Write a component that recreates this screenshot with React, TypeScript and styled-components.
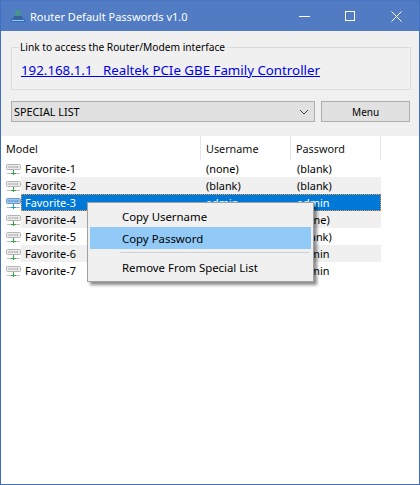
import React from "react";
import styled, { createGlobalStyle } from "styled-components";

const Global = createGlobalStyle`
  html, body { margin: 0; padding: 0; background: #fff; }
  body { font-family: "Noto Sans", "Open Sans", sans-serif; font-size: 11px; color: #000; }
  #root { width: 420px; height: 485px; }
`;

const Window = styled.div`
  width: 420px;
  height: 485px;
  box-sizing: border-box;
  border: 1px solid #3f6fc4;
  border-top-color: #4a74c0;
  display: flex;
  flex-direction: column;
  background: #fff;
  position: relative;
  overflow: hidden;
`;

const TitleBar = styled.div`
  height: 30px;
  flex: none;
  background: #517bc3;
  display: flex;
  align-items: center;
  padding-left: 9px;
  color: #fff;
`;

const AppIcon = styled.svg`
  width: 16px;
  height: 16px;
  flex: none;
  margin-right: 4px;
`;

const Title = styled.span`
  flex: 1;
  font-size: 11px;
`;

const CaptionButton = styled.div`
  width: 46px;
  height: 30px;
  display: flex;
  align-items: center;
  justify-content: center;
`;

const Top = styled.div`
  flex: none;
  height: 105px;
  background: #f0f0f0;
  padding: 16px 9px 0 10px;
  box-sizing: border-box;
`;

const Group = styled.div`
  height: 43px;
  width: 400px;
  box-sizing: border-box;
  border: 1px solid #dcdcdc;
  position: relative;
  padding: 13px 0 0 9px;
`;

const Legend = styled.span`
  position: absolute;
  left: 7px;
  top: -8px;
  background: #f0f0f0;
  padding: 0 2px 0 1px;
  font-size: 10.2px;
  line-height: 15px;
`;

const IpLink = styled.a`
  color: #0000e6;
  text-decoration: underline;
  font-size: 13.3px;
  line-height: 19px;
  white-space: pre;
  display: block;
`;

const Controls = styled.div`
  display: flex;
  margin-top: 11px;
  gap: 6px;
`;

const Select = styled.div`
  width: 305px;
  height: 21px;
  box-sizing: border-box;
  background: #e1e1e1;
  border: 1px solid #adadad;
  display: flex;
  align-items: center;
  justify-content: space-between;
  padding: 0 5px 0 2px;
  font-size: 10.8px;
`;

const MenuButton = styled.div`
  width: 89px;
  height: 21px;
  box-sizing: border-box;
  background: #e1e1e1;
  border: 1px solid #adadad;
  display: flex;
  align-items: center;
  justify-content: center;
  font-size: 10px;
`;

const List = styled.div`
  flex: 1;
  background: #fff;
  position: relative;
`;

const Header = styled.div`
  display: grid;
  grid-template-columns: 200px 90px 90px;
  height: 24px;
`;

const HeaderCell = styled.div`
  border-right: 1px solid #e5e5e5;
  display: flex;
  align-items: center;
  padding-left: 5px;
  color: #111;
  font-size: 10.8px;
`;

const Row = styled.div`
  display: flex;
  height: 17px;
  align-items: center;
`;

const RowIcon = styled.svg`
  width: 16px;
  height: 16px;
  flex: none;
  margin: 0 0 0 4px;
`;

const RowBody = styled.div<{ $striped?: boolean; $selected?: boolean }>`
  width: 360px;
  height: 17px;
  box-sizing: border-box;
  display: grid;
  grid-template-columns: 181px 91px 88px;
  align-items: center;
  background: ${(p) => (p.$selected ? "#0078d7" : p.$striped ? "#f0f0f0" : "transparent")};
  color: ${(p) => (p.$selected ? "#fff" : "#000")};
  outline: ${(p) => (p.$selected ? "1px dotted #ff9a2e" : "none")};
  outline-offset: -1px;
  font-size: 10.9px;
`;

const Cell = styled.span`
  padding-left: 4px;
  white-space: nowrap;
`;

const ContextMenu = styled.div`
  position: absolute;
  left: 86px;
  top: 66px;
  width: 227px;
  height: 80px;
  box-sizing: border-box;
  background: #f0f0f0;
  border: 1px solid #a0a0a0;
  box-shadow: 3px 3px 3px rgba(0, 0, 0, 0.45);
  padding: 2px;
  font-size: 11.4px;
`;

const MenuItem = styled.div<{ $active?: boolean }>`
  height: 22px;
  display: flex;
  align-items: center;
  padding-left: 32px;
  background: ${(p) => (p.$active ? "#91c9f7" : "transparent")};
`;

const MenuSep = styled.div`
  height: 1px;
  background: #d0d0d0;
  margin: 3px 2px 3px 30px;
`;

const Computer = ({ selected }: { selected?: boolean }) => (
  <RowIcon viewBox="0 0 16 16">
    <rect x="1.5" y="3.5" width="14" height="5" rx="1" fill={selected ? "#9cc6ee" : "#ececec"} stroke={selected ? "#6b9cc8" : "#b4b4b4"} />
    <path d="M3.5 6h2M6.5 6h2M9.5 6h2M12 6h1.5" stroke={selected ? "#1c5f9c" : "#666"} strokeWidth="1" strokeDasharray="1 0.6" />
    <path d="M2 12.5h13" stroke={selected ? "#8fbce2" : "#c0c0c0"} strokeWidth="1" />
    <path d="M8.5 9v5M6 12.5h5" stroke={selected ? "#2a9bb0" : "#3aa64a"} strokeWidth="1" />
  </RowIcon>
);

const rows = [
  ["Favorite-1", "(none)", "(blank)"],
  ["Favorite-2", "(blank)", "(blank)"],
  ["Favorite-3", "admin", "admin"],
  ["Favorite-4", "admin", "(none)"],
  ["Favorite-5", "admin", "(blank)"],
  ["Favorite-6", "admin", "admin"],
  ["Favorite-7", "admin", "admin"],
];

export default function App() {
  return (
    <Window>
      <Global />
      <TitleBar>
        <AppIcon viewBox="0 0 16 16">
          <path d="M6 2h4v1H6zM5.5 4h5v1h-5zM5 6h6v1H5z" fill="#3fae5c" />
          <path d="M4 8h8l1 4H3z" fill="#3d5f96" />
          <rect x="1" y="11" width="14" height="3" fill="#2f6fc0" />
          <rect x="2" y="12" width="12" height="1" fill="#9cc4ee" />
        </AppIcon>
        <Title>Router Default Passwords v1.0</Title>
        <CaptionButton>
          <svg width="11" height="11" viewBox="0 0 11 11"><path d="M0 5.5h11" stroke="#fff" /></svg>
        </CaptionButton>
        <CaptionButton>
          <svg width="11" height="11" viewBox="0 0 11 11"><rect x="0.5" y="0.5" width="9" height="9" fill="none" stroke="#fff" /></svg>
        </CaptionButton>
        <CaptionButton>
          <svg width="11" height="11" viewBox="0 0 11 11"><path d="M0.5 0.5l10 10M10.5 0.5l-10 10" stroke="#fff" /></svg>
        </CaptionButton>
      </TitleBar>
      <Top>
        <Group>
          <Legend>Link to access the Router/Modem interface</Legend>
          <IpLink>{"192.168.1.1   Realtek PCIe GBE Family Controller"}</IpLink>
        </Group>
        <Controls>
          <Select>
            <span>SPECIAL LIST</span>
            <svg width="10" height="6" viewBox="0 0 10 6"><path d="M1 1l4 4 4-4" fill="none" stroke="#444" /></svg>
          </Select>
          <MenuButton>Menu</MenuButton>
        </Controls>
      </Top>
      <List>
        <Header>
          <HeaderCell>Model</HeaderCell>
          <HeaderCell>Username</HeaderCell>
          <HeaderCell>Password</HeaderCell>
        </Header>
        {rows.map((r, i) => (
          <Row key={r[0]}>
            <Computer selected={i === 2} />
            <RowBody $striped={i % 2 === 1} $selected={i === 2}>
              <Cell>{r[0]}</Cell>
              <Cell>{r[1]}</Cell>
              <Cell>{r[2]}</Cell>
            </RowBody>
          </Row>
        ))}
        <ContextMenu>
          <MenuItem>Copy Username</MenuItem>
          <MenuItem $active>Copy Password</MenuItem>
          <MenuSep />
          <MenuItem>Remove From Special List</MenuItem>
        </ContextMenu>
      </List>
    </Window>
  );
}
